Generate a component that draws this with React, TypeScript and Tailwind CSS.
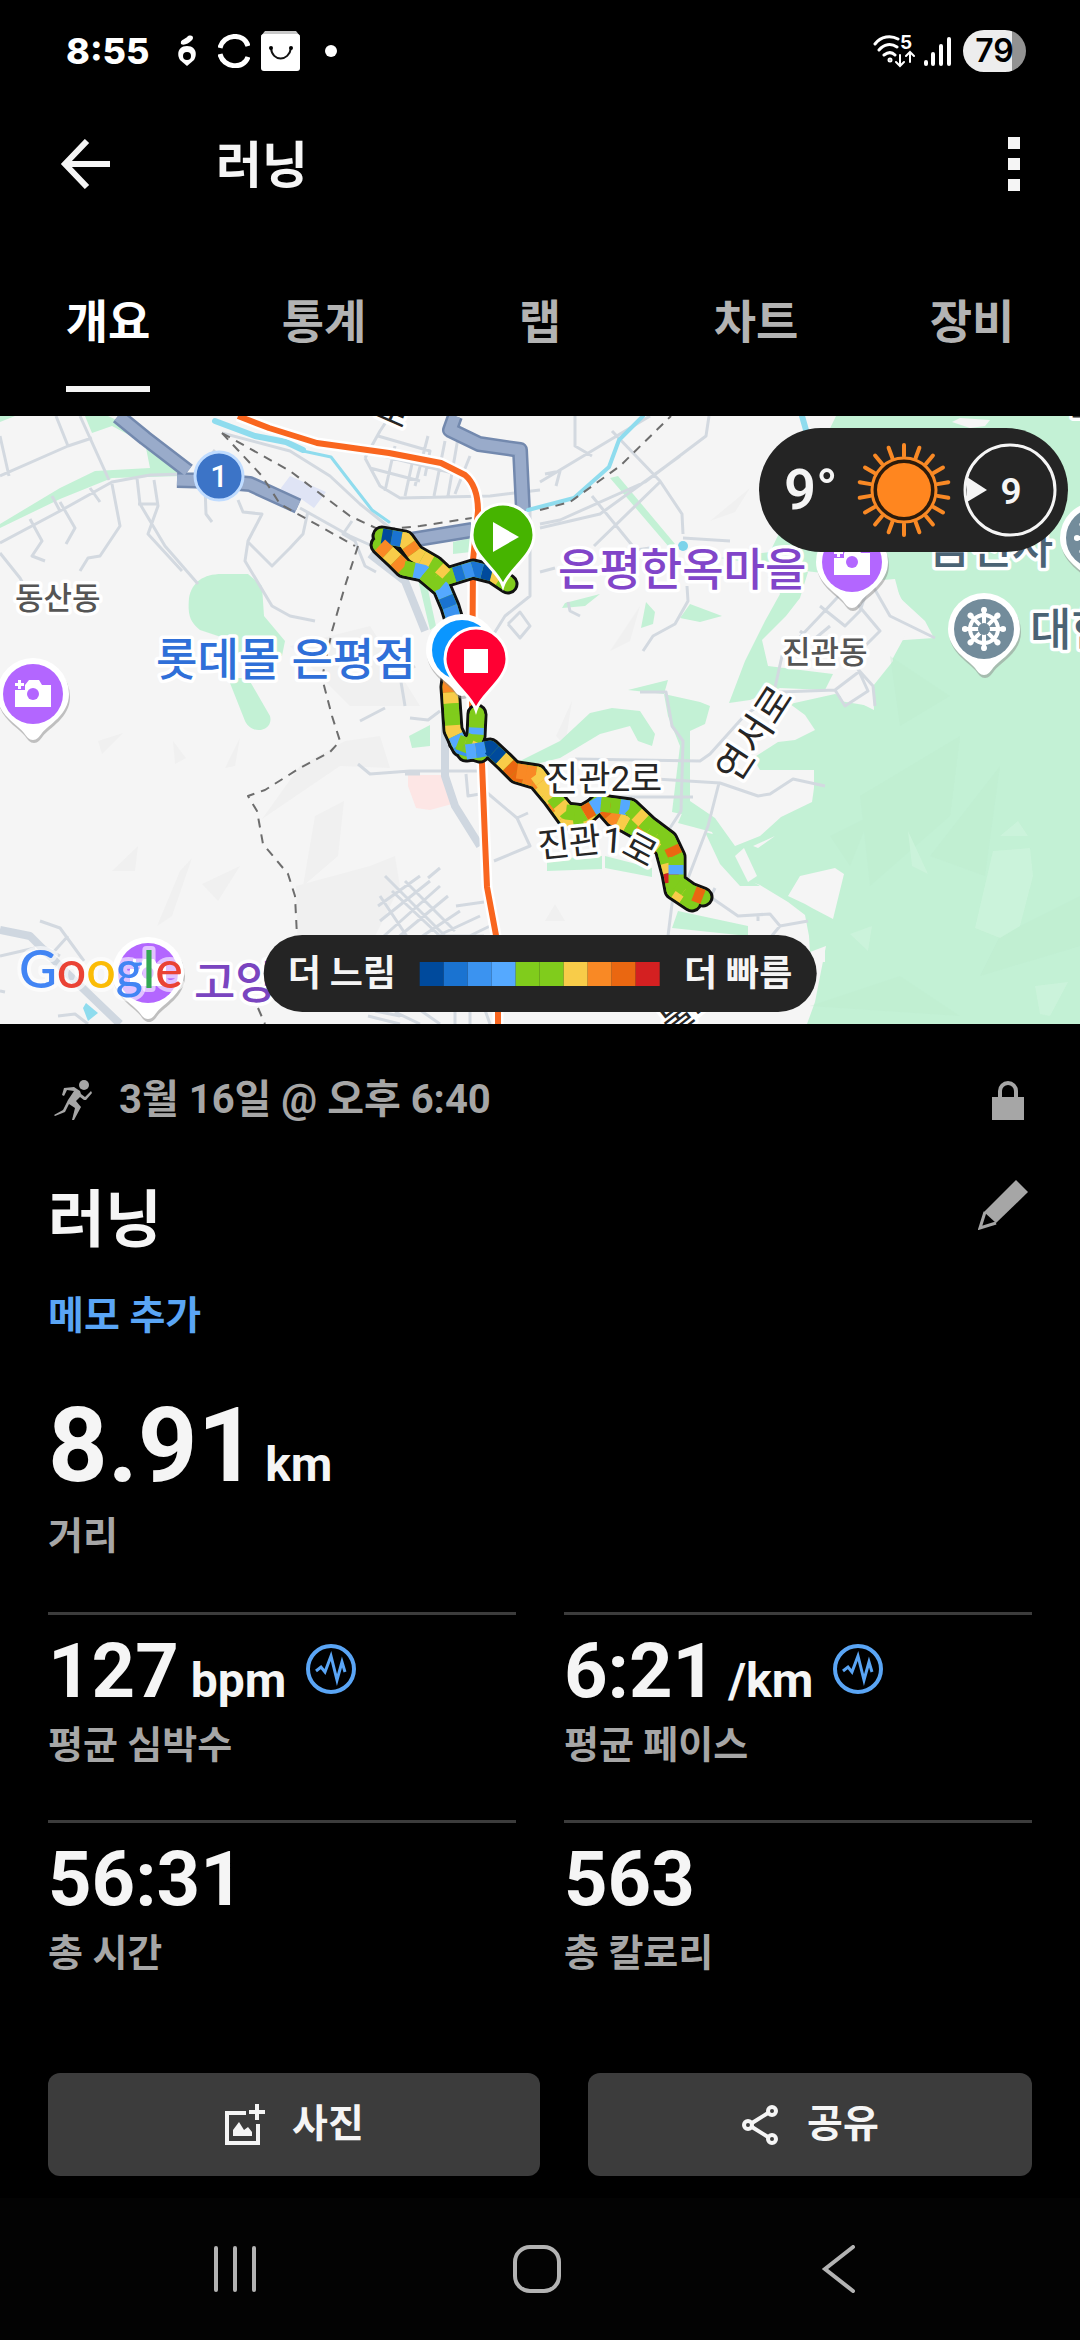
import React, { useState } from "react";

const TABS = ["개요", "통계", "랩", "차트", "장비"];

const PACE_COLORS = [
  "#004a9c",
  "#1a73d1",
  "#3b93f0",
  "#55a9ff",
  "#80cc1c",
  "#80cc1c",
  "#f8cc49",
  "#f98925",
  "#ea6711",
  "#d42021",
];

interface Stat {
  value: string;
  unit?: string;
  label: string;
  chart?: boolean;
}

const STATS: Stat[] = [
  { value: "127", unit: "bpm", label: "평균 심박수", chart: true },
  { value: "6:21", unit: "/km", label: "평균 페이스", chart: true },
  { value: "56:31", label: "총 시간" },
  { value: "563", label: "총 칼로리" },
];

// 구간 색상: 숫자는 PACE_COLORS 인덱스
const ROUTE: { d: string; paces: number[] }[] = [
  {
    d: "M508 168L493 158L473 153L447 161L434 149L415 138L405 124L382 120",
    paces: [5, 6, 0, 1, 2, 1, 5, 6, 5, 6, 6, 7, 6, 1, 0],
  },
  {
    d: "M380 129L395 143L404 152L423 156L442 172L450 191L457 214L450 271L453 314L461 331L480 337",
    paces: [7, 6, 7, 5, 3, 5, 5, 3, 1, 2, 3, 5, 5, 5, 5, 8, 7, 6, 5, 5, 6, 3, 2, 5],
  },
  { d: "M477 298L476 320L471 331L458 326", paces: [5, 5, 3, 5, 6, 5, 5] },
  {
    d: "M466 336L480 334L490 332L504 345L517 358L537 364L552 382L568 404L583 402L600 386L614 402L627 408L650 421L664 432L671 458L674 474L692 486",
    paces: [3, 2, 0, 0, 6, 8, 8, 7, 7, 6, 6, 7, 6, 6, 5, 6, 5, 5, 8, 7, 6, 5, 7, 6, 6, 5, 5, 6, 9, 5, 6, 5],
  },
  {
    d: "M517 355L537 358L556 384L566 396L583 398L600 388L630 392L648 409L668 424L676 441L676 466L690 476L703 481",
    paces: [7, 7, 6, 6, 6, 5, 6, 5, 5, 8, 3, 5, 5, 3, 5, 6, 5, 5, 5, 5, 8, 5, 3, 5, 5, 5, 8],
  },
];

const ROADS =
  "M0 127L60 95L112 66L150 59L183 58M0 60L68 30L92 22M56 0L68 30M80 0L109 64M0 20L9 60M52 80L60 95" +
  "M112 68L120 110L100 140L88 142L80 155M137 62L140 88L165 130L198 168M154 64L158 90L148 118L182 155M138 88L158 88M30 103L42 125L32 140L45 145M60 86L75 112L66 128" +
  "M0 137L20 162L30 180M90 72L100 86M205 70L206 98L212 106M232 60L226 75M215 34L206 45L206 62M238 84L243 96L262 98L248 125L245 145L272 190L290 200L315 205" +
  "M248 126L272 150L290 132L303 118L308 95M222 17L290 35L330 60L360 88L395 116M300 92L350 120L395 140M352 105L343 118L355 125L365 150L376 156" +
  "M365 42L380 15L390 0M365 42L380 70L400 82L490 80L540 74M378 20L430 35L425 60M395 30L385 75M412 48L405 80M428 20L415 70M445 25L434 80M458 22L448 80M470 40L462 60L455 78M375 38L465 60M370 52L420 65" +
  "M540 108L560 104L645 66L706 20L709 0M540 112L600 98L680 40M592 80L636 134L650 132M612 15L660 65L682 98L683 118M594 130L661 65M540 156L555 152M540 66L575 45L650 0M575 0L575 30L592 40M545 58L560 55L556 70" +
  "M530 94L530 180L505 200L480 240M508 208L520 196L530 210L520 222L508 208M683 122L730 125M687 170L688 185L675 208L653 220L643 235M568 186L570 195L580 200" +
  "M415 250L400 260L405 290M360 305L385 292M410 302L428 304L440 295M358 348L370 358L410 355L480 355M405 358L420 358M466 358L468 380L480 378M485 375L517 402L530 430L494 445M517 402L528 397" +
  "M575 343L700 345L710 338L745 299L780 276L835 274L860 255M640 362L720 367L758 380L770 378L793 363L825 370M590 381L693 381M640 276L666 276L672 310L683 325L681 395L670 412M719 367L708 410L687 465" +
  "M774 276L782 240L820 200L850 168M820 190L845 210L860 195L870 165L890 200L935 222M838 165L880 215L865 230L850 250M855 250L873 270L875 290M800 215L812 225L830 210M852 240L868 275L845 290L835 274" +
  "M709 480L738 500L770 498L780 510L808 505M758 498V505M780 510L770 522M673 480L668 520L610 545M680 520L640 540M715 472L710 482" +
  "M385 460L445 520M392 475L440 520M405 465L455 515M378 490L420 460M380 505L430 465M384 520L440 470M390 528L448 480M400 535L460 495M420 528L480 500M440 520L484 520M445 532L490 510M428 462L440 452M456 490L484 486M380 480L420 540" +
  "M0 514L25 520L60 540M40 505L60 512L84 545M50 540L68 520M0 540L35 532M58 600L75 598L88 608M0 575L5 576M368 600L400 608M375 595L400 600M420 594L440 608M455 594V608M470 594V608M485 594L490 608M395 596L420 608";

const HALO = "stroke-white stroke-[7px] [paint-order:stroke] [stroke-linejoin:round]";

const Pin: React.FC<{ x: number; y: number; color: string; children?: React.ReactNode }> = ({
  x,
  y,
  color,
  children,
}) => (
  <g transform={`translate(${x} ${y})`}>
    <path
      d="M0 46C-4 46-6 43-9 39C-15 31-36 21-36 0A36 36 0 0 1 36 0C36 21 15 31 9 39C6 43 4 46 0 46Z"
      fill="#8a8a8a"
      opacity=".5"
      transform="translate(1 3)"
    />
    <path
      d="M0 46C-4 46-6 43-9 39C-15 31-36 21-36 0A36 36 0 0 1 36 0C36 21 15 31 9 39C6 43 4 46 0 46Z"
      fill="#fff"
    />
    <circle r="30" fill={color} />
    {children}
  </g>
);

const CameraGlyph = () => (
  <g>
    <path
      d="M-18 -4H-8V-9L-4 -14H6L9 -9H18V13H-18Z M-15 -14H-12V-11H-9V-8H-12V-5H-15V-8H-18V-11H-15Z"
      fill="#fff"
    />
    <circle r="6" cy="0" fill="#b366ff" />
  </g>
);

const WheelGlyph = () => (
  <g stroke="#fff" strokeLinecap="round" fill="none">
    <circle r="14" strokeWidth="4" />
    {[0, 45, 90, 135].map((a) => (
      <line key={a} y1="-20" y2="20" strokeWidth="4" transform={`rotate(${a})`} />
    ))}
    {[0, 45, 90, 135, 180, 225, 270, 315].map((a) => (
      <circle key={a} cy="-19" r="1" strokeWidth="4" transform={`rotate(${a})`} />
    ))}
    <circle r="6" fill="#738c9b" stroke="none" />
  </g>
);

const RunMarker: React.FC<{ x: number; y: number; color: string; children: React.ReactNode }> = ({
  x,
  y,
  color,
  children,
}) => (
  <g transform={`translate(${x} ${y})`}>
    <path
      d="M0 50C-5 34-31 20-31 -1A31 31 0 0 1 31 -1C31 20 5 34 0 50Z"
      fill={color}
      stroke="#fff"
      strokeWidth="3"
    />
    {children}
  </g>
);

const ActivityMap = () => (
  <svg
    viewBox="0 0 1080 608"
    className="block w-full"
    role="img"
    aria-label="러닝 경로 지도"
    fontFamily="Roboto, 'Noto Sans CJK KR', sans-serif"
  >
    <rect width="1080" height="608" fill="#f5f5f5" />

    {/* 지형 음영 */}
    <g fill="#f0f0f0">
      <path d="M98 325L123 317L102 338ZM173 325L186 342L175 348ZM240 322L225 352L235 350ZM180 455L192 442L172 500L157 510ZM202 468L240 450L218 485ZM112 455L138 430L135 455ZM315 400L344 385L338 440L303 470ZM370 450L395 440L400 470L370 530L298 545L296 470Z" />
      <path d="M262 403L340 350L390 352L380 320L345 325L300 350ZM710 105L750 72L735 96ZM610 235L640 190L630 225ZM556 320L572 285L565 330ZM545 505L555 488L565 505ZM290 230L370 210L420 290L350 290Z" />
    </g>

    {/* 녹지 */}
    <g fill="#c3f1d5">
      <path d="M836 0H1080V608H807L815 586L826 530L810 536L809 520L805 499L788 486L760 469L733 459L721 439L712 416L678 407L683 395L690 385L715 402L735 430L760 420L781 401L812 386L814 372L814 354H760L753 342L778 326L795 324L815 314L805 299L790 288L835 278L862 288L874 294L873 270L893 245L890 225L934 222L925 205L900 182L895 163L870 165L850 160L805 155L720 142L770 136Z" />
      <path d="M770 156L808 156L800 182L786 200L762 224L768 250L833 258L825 274L780 272L750 284L729 287L745 245L765 205L780 178Z" />
      <path d="M0 108L60 72L95 55L150 52L146 32L125 8L108 0H85L92 17L112 10L150 30L178 52L182 60L112 62L60 83L0 112Z" />
      <path d="M0 0H15L0 6ZM189 182C192 165 205 157 225 158L248 158L262 170L264 200L285 225L282 240H235L230 224L200 214C188 205 188 195 189 182ZM228 262H248L270 300C274 315 252 320 245 305Z" />
      <path d="M610 62L618 60L675 128L669 131ZM453 126L471 122V136L453 138ZM416 155L425 160L436 210L430 214ZM409 320L430 309V330L412 332ZM641 212L646 186L655 196L653 208ZM680 202L690 188L722 200L700 206ZM565 187L600 178L585 190L562 192Z" />
      <path d="M628 274L668 264L664 278L700 286L710 290L705 308L690 315L690 400L672 396L680 330L668 300L664 278ZM520 345L560 325L590 297L612 292L640 295L655 318L652 330L638 325L630 310L600 318L560 342L528 350Z" />
      <path d="M547 443L602 440V453L547 455ZM605 440L652 452V461L605 452ZM678 495L748 510V520L672 512ZM705 416L720 420L735 455L760 470L740 470L720 448Z" />
    </g>
    <g fill="#f5f5f5">
      <path d="M788 480L800 460L835 452L844 458L833 503L812 492L805 488ZM952 6L960 2L990 4L985 10L970 12ZM735 440L744 432L757 460L748 466ZM753 430L775 420L758 432Z" />
      <path d="M868 168L893 166L903 186L932 220L905 220L893 242L872 250L870 290L840 285L845 250L820 240L810 215L830 185Z" />
      <path d="M820 545L825 532V546H815Z" />
    </g>
    <g fill="#bcebcf" opacity=".35">
      <path d="M860 380L960 320L950 400L870 470ZM930 440L1000 350L985 460ZM1000 520L1080 480V530L980 560ZM810 590L900 560L960 600ZM890 240L950 280L900 310ZM830 420L870 400L850 450Z" />
    </g>
    <g fill="#cdf4dc" opacity=".8">
      <path d="M993 435L1030 432L1033 460L1020 510L1000 522L975 512ZM1000 420L1018 405L1028 420ZM912 450L908 415L928 458ZM1035 570L1068 566L1050 600L1040 598ZM850 518L872 510L868 535Z" />
    </g>
    <path d="M408 359H442L452 388L430 394L416 392L408 370Z" fill="#fde6e5" />
    <path d="M290 60L326 76L314 92L300 82L285 84L281 72Z" fill="#dfe4f5" />
    <path d="M86 587L98 597L88 605L83 592Z" fill="#8fdcee" />

    {/* 도로 */}
    <path d={ROADS} fill="none" stroke="#d3d9e0" strokeWidth="3" strokeLinejoin="round" />
    <g fill="none" stroke="#cfd7e0" strokeWidth="8" strokeLinejoin="round">
      <path d="M370 138L405 165L425 215M445 270V360L455 390L480 430" />
      <path d="M0 514L30 520L70 560L120 608" />
    </g>
    <g fill="none" strokeLinejoin="round">
      <g stroke="#7389ae" strokeWidth="16">
        <path d="M118 0L145 22L188 55M177 64L215 65L250 68L298 90M455 0L450 14L479 28L520 34L523 95M411 124L472 114" />
      </g>
      <g stroke="#99abca" strokeWidth="11">
        <path d="M118 0L145 22L188 55M177 64L215 65L250 68L298 90M455 0L450 14L479 28L520 34L523 95M411 124L472 114" />
      </g>
      <g stroke="#8fdcee" strokeLinecap="round">
        <path d="M215 5L255 20L286 26L303 34" strokeWidth="6" />
        <path d="M303 35L331 41L351 67L372 94L389 106" strokeWidth="3" />
        <path d="M528 94L574 82L609 51L619 24L643 0" strokeWidth="4" />
        <path d="M802 0L806 14" strokeWidth="6" />
      </g>
      <circle cx="683" cy="130" r="5" fill="#7cd3ea" />
      <g stroke="#6d6d6d" strokeWidth="2" strokeDasharray="9 7">
        <path d="M222 17L290 55L350 100L380 114L420 110L472 102M540 94L570 86L620 50L671 0M222 17L262 60L280 88L355 130M358 130L345 170L332 215L322 262L332 300L340 325L330 336L300 352L265 374L248 380L257 395L263 428L288 458L295 480L297 520M258 592L265 608" />
      </g>
      <path
        d="M238 0L269 12L317 27L389 37L441 47L465 59Q478 70 478 95L473 144L472 300L482 347L485 424L487 471L498 530V608"
        stroke="#fff"
        strokeWidth="11"
      />
      <path
        d="M238 0L269 12L317 27L389 37L441 47L465 59Q478 70 478 95L473 144L472 300L482 347L485 424L487 471L498 530V608"
        stroke="#f9661f"
        strokeWidth="6"
      />
    </g>

    {/* 러닝 경로 */}
    <g fill="none" strokeLinejoin="round">
      {ROUTE.map((r, i) => (
        <path key={i} d={r.d} stroke="#111" strokeWidth="21" strokeLinecap="round" />
      ))}
      {ROUTE.map((r, i) => (
        <path key={i} d={r.d} stroke="#80cc1c" strokeWidth="15" strokeLinecap="round" />
      ))}
      {ROUTE.map((r) =>
        r.paces.map((p, i) => (
          <path
            key={i}
            d={r.d}
            pathLength={r.paces.length}
            stroke={PACE_COLORS[p]}
            strokeWidth="15"
            strokeDasharray={`1 ${r.paces.length}`}
            strokeDashoffset={-i}
          />
        ))
      )}
    </g>

    <circle cx="219" cy="60" r="24" fill="#3c74c7" stroke="#c0dcff" strokeWidth="3" />
    <text x="219" y="71" fontSize="31" fontWeight="500" fill="#fff" textAnchor="middle">
      1
    </text>

    {/* 지명 */}
    <g className={HALO}>
      <g fill="#555" fontSize="31" fontWeight="500">
        <text x="15" y="193">동산동</text>
        <text x="782" y="247">진관동</text>
      </g>
      <g fontSize="45" fontWeight="500">
        <text x="156" y="260" fill="#2f6fd8">롯데몰 은평점</text>
        <text x="558" y="170" fill="#8145c9">은평한옥마을</text>
        <text x="194" y="583" fill="#7a45c0">고양</text>
        <text x="1030" y="230" fill="#4b6374">대한</text>
        <text x="929" y="148" fill="#4b6374">금선사</text>
      </g>
      <g fill="#262626" fontSize="35">
        <text x="546" y="375">진관2로</text>
        <text x="539 570 602 620" y="442 439 436 437" rotate="-6 -6 4 28">진관1로</text>
        <text fontSize="38" transform="translate(737 369) rotate(-57)">연서로</text>
        <text transform="translate(374 0) rotate(24)">로</text>
        <text transform="translate(672 620) rotate(-38)">불로</text>
        <text x="1066" y="-1">산</text>
      </g>
    </g>

    <Pin x={33} y={278} color="#b366ff">
      <CameraGlyph />
    </Pin>
    <Pin x={852} y={146} color="#b366ff">
      <CameraGlyph />
    </Pin>
    <Pin x={148} y={557} color="#b366ff">
      <CameraGlyph />
    </Pin>
    <Pin x={984} y={213} color="#738c9b">
      <WheelGlyph />
    </Pin>
    <Pin x={1096} y={122} color="#738c9b">
      <WheelGlyph />
    </Pin>
    <Pin x={462} y={234} color="#0a96ff" />

    <RunMarker x={503} y={120} color="#46b400">
      <path d="M-10 -14V16L16 1Z" fill="#fff" />
    </RunMarker>
    <RunMarker x={476} y={244} color="#ff0033">
      <rect x="-12" y="-11" width="24" height="24" fill="#fff" />
    </RunMarker>

    <text
      x="19"
      y="572"
      fontSize="52"
      fontWeight="500"
      fontFamily="Lato, sans-serif"
      className="stroke-white/60 stroke-[8px] [paint-order:stroke] [stroke-linejoin:round]"
    >
      <tspan fill="#4285f4">G</tspan>
      <tspan fill="#ea4335">o</tspan>
      <tspan fill="#fbbc05">o</tspan>
      <tspan fill="#4285f4">g</tspan>
      <tspan fill="#34a853">l</tspan>
      <tspan fill="#ea4335">e</tspan>
    </text>
  </svg>
);

const SunIcon = () => (
  <svg viewBox="-47 -47 94 94" className="size-[94px]" aria-hidden="true">
    <g stroke="#f98925" strokeWidth="4" strokeLinecap="round">
      {Array.from({ length: 18 }, (_, i) => (
        <line key={i} y1="-34" y2="-45" transform={`rotate(${i * 20})`} />
      ))}
    </g>
    <circle r="32" fill="#2c1b0c" stroke="#f98925" strokeWidth="3" />
    <circle r="27" fill="#ff861f" />
  </svg>
);

const WaveIcon = () => (
  <svg viewBox="0 0 50 50" className="mb-1 size-[50px]" fill="none" stroke="#5aa5f5" aria-hidden="true">
    <circle cx="25" cy="25" r="23" strokeWidth="4" />
    <path d="M10 27L15 23L19 28L25 12L31 36L36 18L39 28" strokeWidth="3" />
  </svg>
);

const StatusBar = () => (
  <div className="flex h-[102px] items-center justify-between pl-[66px] pr-[54px] text-white">
    <div className="flex items-center">
      <span className="font-[Inter,sans-serif] text-4xl font-extrabold">8:55</span>
      <svg viewBox="0 0 18 32" className="ml-7 h-8 w-[18px]" aria-hidden="true">
        <path d="M3 9C2 4 7 5 10 1C16-1 16 4 13 6C11 8 6 11 3 9Z" fill="#fff" />
        <path d="M9 11C17 11 20 18 16 25L9 31L2 25C-2 18 1 11 9 11Z" fill="#fff" />
        <circle cx="9" cy="21" r="4" fill="#000" />
      </svg>
      <svg viewBox="0 0 32 34" className="ml-[22px] h-[34px] w-8" fill="none" stroke="#fff" strokeWidth="5" aria-hidden="true">
        <path d="M2 14C5 0 26-2 30 12" />
        <path d="M2 20C5 34 26 36 30 23" />
      </svg>
      <svg viewBox="0 0 40 40" className="ml-[11px] size-10" aria-hidden="true">
        <path d="M4 0H35L39 5H0Z" fill="#c8c8c8" />
        <rect y="3" width="39" height="37" rx="3" fill="#fff" />
        <path d="M10 17C11 31 28 31 30 17" fill="none" stroke="#111" strokeWidth="2" />
        <circle cx="10" cy="17" r="2" />
        <circle cx="30" cy="17" r="2" />
      </svg>
      <span className="ml-6 size-3 rounded-full bg-white" />
    </div>
    <div className="flex items-center">
      <svg viewBox="0 0 42 34" className="h-[34px] w-[42px]" fill="none" stroke="#fff" strokeWidth="3" strokeLinecap="round" aria-hidden="true">
        <path d="M2 10C8 2 18 1 25 5M6 16C11 10 18 9 24 13M11 21C15 18 19 18 22 21" />
        <circle cx="17" cy="26" r="1" />
        <path d="M27 21V31M23 28L27 32L31 28M37 28V18M33 22L37 18L41 22" strokeWidth="2" />
        <text x="27" y="15" fontSize="19" fontWeight="700" fill="#fff" stroke="none" fontFamily="Inter, sans-serif">
          5
        </text>
      </svg>
      <svg viewBox="0 0 28 32" className="ml-2 h-8 w-7" stroke="#fff" strokeWidth="4" strokeLinecap="round" aria-hidden="true">
        <path d="M3 27V29M10 19V29M18 11V29M26 4V29" />
      </svg>
      <span className="ml-3 flex h-[42px] w-[63px] items-center justify-center rounded-full bg-linear-to-r from-[#ededed] from-78% to-[#929292] to-78% font-[Inter,sans-serif] text-[32px] font-semibold text-black">
        79
      </span>
    </div>
  </div>
);

const App: React.FC = () => {
  const [tab, setTab] = useState("개요");

  return (
    <div className="flex min-h-screen flex-col bg-black font-[Roboto,'Noto_Sans_CJK_KR',sans-serif] text-[#f5f5f5]">
      <StatusBar />

      <header className="flex h-[124px] items-center pl-[60px] pr-12">
        <button type="button" aria-label="뒤로">
          <svg viewBox="0 0 50 50" className="size-[50px]" fill="none" stroke="currentColor" strokeWidth="6" aria-hidden="true">
            <path d="M27 2L5 25L27 48M4 25H50" />
          </svg>
        </button>
        <h1 className="ml-[106px] flex-1 pt-1 text-[50px] font-bold">러닝</h1>
        <button type="button" aria-label="더보기" className="flex w-9 flex-col items-center gap-[9px]">
          <span className="size-3 bg-current" />
          <span className="size-3 bg-current" />
          <span className="size-3 bg-current" />
        </button>
      </header>

      <nav className="grid grid-cols-5 pb-6 pt-[66px]">
        {TABS.map((name) => (
          <button
            key={name}
            type="button"
            onClick={() => setTab(name)}
            className={`justify-self-center border-b-6 pb-[34px] text-[46px] leading-[60px] font-bold ${
              tab === name ? "border-[#f5f5f5] text-white" : "border-transparent text-[#b3b3b3]"
            }`}
          >
            {name}
          </button>
        ))}
      </nav>

      <section className="relative overflow-hidden">
        <ActivityMap />
        <div className="absolute right-3 top-3 flex h-[124px] items-center gap-3 rounded-full bg-[#242424] pl-[25px] pr-[11px]">
          <span className="w-[61px] text-[56px] font-semibold">9°</span>
          <SunIcon />
          <svg viewBox="0 0 94 94" className="size-[94px]" aria-label="풍속">
            <circle cx="47" cy="47" r="45" fill="none" stroke="#f5f5f5" strokeWidth="3" />
            <path d="M4 34L24 47L4 59Z" fill="#f5f5f5" />
            <text x="48" y="61" fontSize="37" fontWeight="600" fill="#f5f5f5" textAnchor="middle">
              9
            </text>
          </svg>
        </div>
        <div className="absolute bottom-3 left-1/2 flex h-[77px] -translate-x-1/2 items-center gap-6 rounded-full bg-[#242424] px-6 text-4xl font-bold whitespace-nowrap">
          <span>더 느림</span>
          <div className="flex">
            {PACE_COLORS.map((color, i) => (
              <span key={i} className="size-6" style={{ backgroundColor: color }} />
            ))}
          </div>
          <span>더 빠름</span>
        </div>
      </section>

      <main className="flex-1 px-12">
        <div className="flex items-center pt-[46px] text-[#a6a6a6]">
          <svg viewBox="0 0 38 40" className="ml-1.5 h-10 w-[38px]" fill="currentColor" aria-hidden="true">
            <circle cx="30" cy="5" r="5" />
            <path d="M10 8L20 7L26 11L27 14L31 17L37 11L38 13L32 20H30L26 17L22 21L27 27L20 40H18L21 28L15 24L11 32L1 36L0 35L9 30L14 20L20 11L13 10L10 16L8 15Z" />
          </svg>
          <p className="ml-[27px] flex-1 text-[40px] leading-[60px] font-bold">3월 16일 @ 오후 6:40</p>
          <svg viewBox="0 0 32 40" className="mr-2 h-10 w-8" aria-label="비공개">
            <path d="M8 18V11A8 8 0 0 1 24 11V18" fill="none" stroke="currentColor" strokeWidth="4" />
            <rect y="17" width="32" height="23" fill="currentColor" />
          </svg>
        </div>

        <div className="mt-[46px] flex justify-between">
          <h2 className="text-[62px] leading-[90px] font-bold">러닝</h2>
          <button type="button" aria-label="이름 편집" className="mr-1 mt-1 self-start text-[#a6a6a6]">
            <svg viewBox="0 0 50 50" className="size-[50px]" aria-hidden="true">
              <path d="M38 0L50 12L18 43L6 32Z" fill="currentColor" />
              <path d="M7 32L2 48L18 43" fill="none" stroke="currentColor" strokeWidth="3" />
            </svg>
          </button>
        </div>
        <a href="#memo" className="mt-5 block w-fit text-[39px] leading-[60px] font-bold text-[#5aa5f5]">
          메모 추가
        </a>

        <div className="mt-9">
          <p className="flex items-baseline gap-2 leading-[128px]">
            <span className="text-[104px] font-bold">8.91</span>
            <span className="text-5xl leading-none font-bold">km</span>
          </p>
          <p className="text-[38px] leading-[52px] font-bold text-[#a6a6a6]">거리</p>
        </div>

        <div className="mt-[50px] grid grid-cols-2 gap-x-12">
          {STATS.map((s) => (
            <div key={s.label} className="h-[208px] border-t-3 border-[#3c3c3c] pt-2">
              <div className="flex items-center gap-5">
                <p className="flex items-baseline gap-3 leading-[96px]">
                  <span className="text-[76px] font-bold">{s.value}</span>
                  {s.unit && <span className="text-5xl leading-none font-bold">{s.unit}</span>}
                </p>
                {s.chart && <WaveIcon />}
              </div>
              <p className="text-[38px] leading-[52px] font-bold text-[#a6a6a6]">{s.label}</p>
            </div>
          ))}
        </div>

        <div className="mt-[45px] flex gap-12 pb-5">
          <button
            type="button"
            className="flex h-[103px] flex-[492] items-center justify-center gap-[26px] rounded-xl bg-[#3c3c3c] text-[39px] font-bold"
          >
            <svg viewBox="0 0 42 42" className="size-[42px]" fill="none" stroke="currentColor" strokeWidth="4" aria-hidden="true">
              <path d="M22 9H3V39H34V20M33 0V16M25 8H41" />
              <path d="M9 32V26L15 18L20 26L24 23L28 28V32Z" fill="currentColor" stroke="none" />
            </svg>
            사진
          </button>
          <button
            type="button"
            className="flex h-[103px] flex-[444] items-center justify-center gap-7 rounded-xl bg-[#3c3c3c] text-[39px] font-bold"
          >
            <svg viewBox="0 0 38 42" className="h-[42px] w-[38px]" fill="none" stroke="currentColor" strokeWidth="4" aria-hidden="true">
              <circle cx="31" cy="7" r="4" />
              <circle cx="7" cy="21" r="4" />
              <circle cx="31" cy="35" r="4" />
              <path d="M27 9L11 19M11 23L27 33" />
            </svg>
            공유
          </button>
        </div>
      </main>

      <footer className="flex h-[142px] items-center justify-center gap-[254px] bg-[#030303] pr-1.5 text-[#b3b3b3]">
        <button type="button" aria-label="최근 앱">
          <svg viewBox="0 0 48 48" className="size-12" stroke="currentColor" strokeWidth="4" strokeLinecap="round" aria-hidden="true">
            <path d="M5 3V45M24 3V45M43 3V45" />
          </svg>
        </button>
        <button type="button" aria-label="홈">
          <svg viewBox="0 0 48 48" className="size-12" fill="none" stroke="currentColor" strokeWidth="4" aria-hidden="true">
            <rect x="2" y="2" width="44" height="44" rx="15" />
          </svg>
        </button>
        <button type="button" aria-label="뒤로 가기">
          <svg viewBox="0 0 48 48" className="size-12" fill="none" stroke="currentColor" strokeWidth="4" strokeLinecap="round" aria-hidden="true">
            <path d="M38 2L10 24L38 46" />
          </svg>
        </button>
      </footer>
    </div>
  );
};

export default App;
